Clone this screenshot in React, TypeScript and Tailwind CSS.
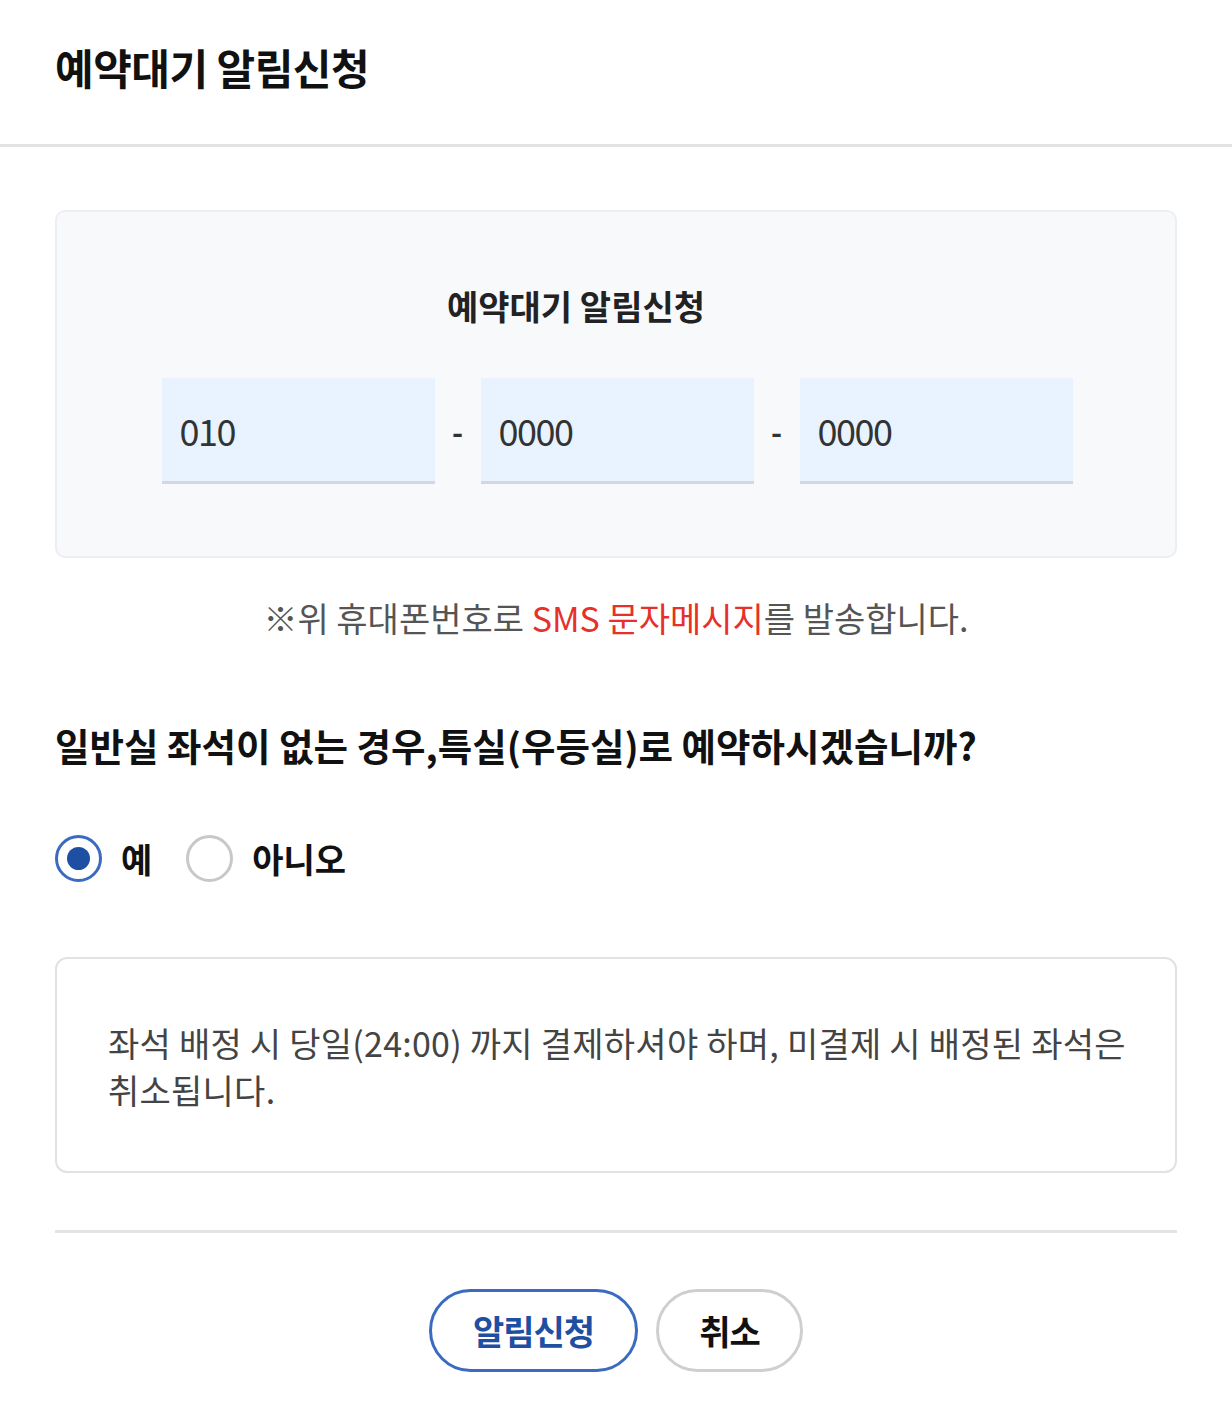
import { useState } from 'react'

const font = { fontFamily: '"Noto Sans CJK KR", "Noto Sans", sans-serif' }

function PhoneField({ value }: { value: string }) {
  return (
    <div className="flex h-[106px] w-[273px] items-center border-b-[3px] border-[#cfd8e3] bg-[#e8f3ff] px-[18px]">
      <span className="text-[36px] tracking-[-1.5px] text-[#333]">{value}</span>
    </div>
  )
}

function Radio({ checked, label, onClick }: { checked: boolean; label: string; onClick: () => void }) {
  return (
    <button onClick={onClick} className="flex items-center gap-[19px]">
      <span
        className={
          checked
            ? 'flex h-[47px] w-[47px] items-center justify-center rounded-full border-[3px] border-[#3a6bc1] bg-white'
            : 'flex h-[47px] w-[47px] items-center justify-center rounded-full border-[3px] border-[#c8c8c8] bg-white'
        }
      >
        {checked && <span className="h-[23px] w-[23px] rounded-full bg-[#1f4fa3]" />}
      </span>
      <span className="text-[34px] font-bold text-[#111]">{label}</span>
    </button>
  )
}

export default function App() {
  const [premium, setPremium] = useState(true)

  return (
    <div className="min-h-[1420px] w-[1232px] bg-white" style={font}>
      <div className="h-[147px] border-b-[3px] border-[#e3e3e3] px-[55px] pt-[35px]">
        <h1 className="text-[42px] font-bold leading-[63px] tracking-[-0.5px] text-[#111]">예약대기 알림신청</h1>
      </div>

      <div className="px-[55px] pt-[63px]">
        <div className="flex flex-col items-center rounded-[10px] border-2 border-[#eceef1] bg-[#f8f9fb] pb-[72px] pt-[68px]">
          <h2 className="mr-[80px] text-[34px] font-bold leading-[51px] text-[#222]">예약대기 알림신청</h2>
          <div className="ml-[2px] mt-[47px] flex items-center">
            <PhoneField value="010" />
            <span className="w-[46px] text-center text-[30px] font-bold text-[#333]">-</span>
            <PhoneField value="0000" />
            <span className="w-[46px] text-center text-[30px] font-bold text-[#333]">-</span>
            <PhoneField value="0000" />
          </div>
        </div>

        <p className="mt-[34px] text-center text-[34px] leading-[51px] text-[#555]">
          ※위 휴대폰번호로 <span className="text-[#e8302a]">SMS 문자메시지</span>를 발송합니다.
        </p>

        <p className="mt-[74px] text-[37.5px] font-bold leading-[56px] text-[#111]">
          일반실 좌석이 없는 경우,특실(우등실)로 예약하시겠습니까?
        </p>

        <div className="mt-[60px] flex items-center gap-[34px]">
          <Radio checked={premium} label="예" onClick={() => setPremium(true)} />
          <Radio checked={!premium} label="아니오" onClick={() => setPremium(false)} />
        </div>

        <div className="mt-[73px] rounded-[12px] border-2 border-[#e2e2e2] pb-[58px] pl-[51px] pr-[30px] pt-[60px]">
          <p className="break-keep text-[34px] leading-[47px] tracking-[0.25px] text-[#444]">
            좌석 배정 시 당일(24:00) 까지 결제하셔야 하며, 미결제 시 배정된 좌석은 취소됩니다.
          </p>
        </div>

        <div className="mt-[57px] border-t-[3px] border-[#e3e3e3]" />

        <div className="mt-[56px] flex justify-center gap-[18px]">
          <button className="flex h-[83px] w-[209px] items-center justify-center rounded-full border-[3px] border-[#3a6bc1] text-[34px] font-bold tracking-[-1px] text-[#1f4fa3]">
            알림신청
          </button>
          <button className="flex h-[83px] w-[147px] items-center justify-center rounded-full border-[3px] border-[#cfcfcf] text-[34px] font-bold tracking-[-1px] text-[#111]">
            취소
          </button>
        </div>
      </div>
    </div>
  )
}
